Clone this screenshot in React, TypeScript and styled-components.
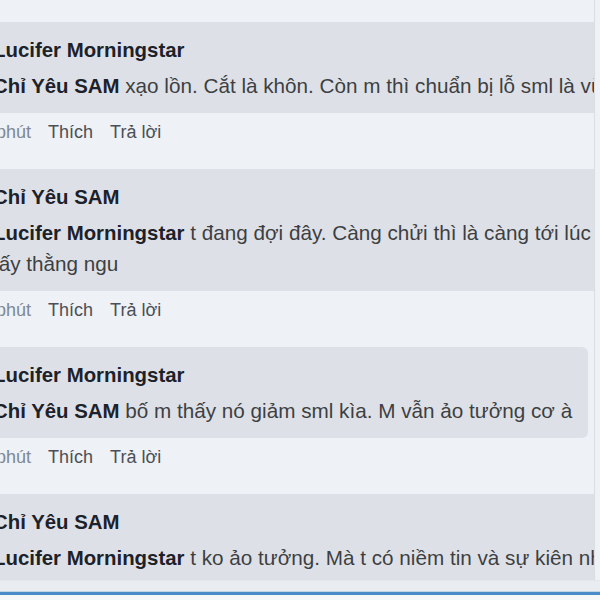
import React from "react";
import styled, { createGlobalStyle } from "styled-components";

const GlobalStyle = createGlobalStyle`
  html, body {
    margin: 0;
    padding: 0;
    background: #eef1f5;
  }
  body {
    font-family: "Liberation Sans", Arial, sans-serif;
  }
`;

type Comment = {
  author: string;
  replyTo: string;
  lines: string[];
};

const comments: Comment[] = [
  {
    author: "Lucifer Morningstar",
    replyTo: "Chỉ Yêu SAM",
    lines: ["xạo lồn. Cắt là khôn. Còn m thì chuẩn bị lỗ sml là vừa đấy"],
  },
  {
    author: "Chỉ Yêu SAM",
    replyTo: "Lucifer Morningstar",
    lines: [
      "t đang đợi đây. Càng chửi thì là càng tới lúc m",
      "tấy thằng ngu",
    ],
  },
  {
    author: "Lucifer Morningstar",
    replyTo: "Chỉ Yêu SAM",
    lines: ["bố m thấy nó giảm sml kìa. M vẫn ảo tưởng cơ à"],
  },
  {
    author: "Chỉ Yêu SAM",
    replyTo: "Lucifer Morningstar",
    lines: ["t ko ảo tưởng. Mà t có niềm tin và sự kiên nhẫn"],
  },
];

const App = () => {
  return (
    <Page>
      <GlobalStyle />
      <Viewport>
        <Thread>
          {comments.map((c, i) => (
            <Item key={i}>
              <Bubble>
                <Author>{c.author}</Author>
                {c.lines.map((line, j) => (
                  <Line key={j}>
                    {j === 0 && <Mention>{c.replyTo}</Mention>}
                    {j === 0 ? " " : ""}
                    {line}
                  </Line>
                ))}
              </Bubble>
              <Actions>
                <Time>phút</Time>
                <Action>Thích</Action>
                <Action>Trả lời</Action>
              </Actions>
            </Item>
          ))}
        </Thread>
        <Track />
      </Viewport>
      <Footer>
        <InputBar />
      </Footer>
    </Page>
  );
};

const Page = styled.div`
  height: 600px;
  display: flex;
  flex-direction: column;
  overflow: hidden;
`;

const Viewport = styled.div`
  flex: 1;
  min-height: 0;
  display: flex;
  overflow: hidden;
`;

const Thread = styled.div`
  flex: 1;
  min-width: 0;
  overflow: hidden;
  padding-top: 22px;
  margin-left: -19px;
`;

const Track = styled.div`
  width: 5px;
  flex-shrink: 0;
  border-left: 1px solid #dadee3;
  background: #eef1f5;
`;

const Item = styled.div`
  margin-bottom: 25px;
`;

const Bubble = styled.div`
  display: inline-block;
  background: #dde1e7;
  border-radius: 6px;
  padding: 13px 16px 12px 12px;
  white-space: nowrap;
`;

const Author = styled.div`
  font-size: 20.4px;
  font-weight: bold;
  line-height: 30px;
  color: #1d2129;
  margin-bottom: 5px;
`;

const Line = styled.div`
  font-size: 20.7px;
  line-height: 31px;
  height: 31px;
  color: #3d3f42;
`;

const Mention = styled.span`
  font-weight: bold;
  font-size: 20.4px;
  line-height: 0;
  color: #1d2129;
`;

const Actions = styled.div`
  display: flex;
  gap: 17px;
  margin-top: 7px;
  padding-left: 15px;
  font-size: 18px;
  line-height: 24px;
`;

const Time = styled.span`
  color: #7f8893;
`;

const Action = styled.span`
  color: #4b4f56;
`;

const Footer = styled.div`
  flex-shrink: 0;
  padding-top: 11px;
  background: #e9edf2;
  border-top: 1px solid #e3e7ec;
`;

const InputBar = styled.div`
  height: 5px;
  border-top: 3px solid #4a8cc7;
  box-shadow: 0 -1px 0 #c3d3e3;
  background: #f6f7f9;
`;

export default App;
